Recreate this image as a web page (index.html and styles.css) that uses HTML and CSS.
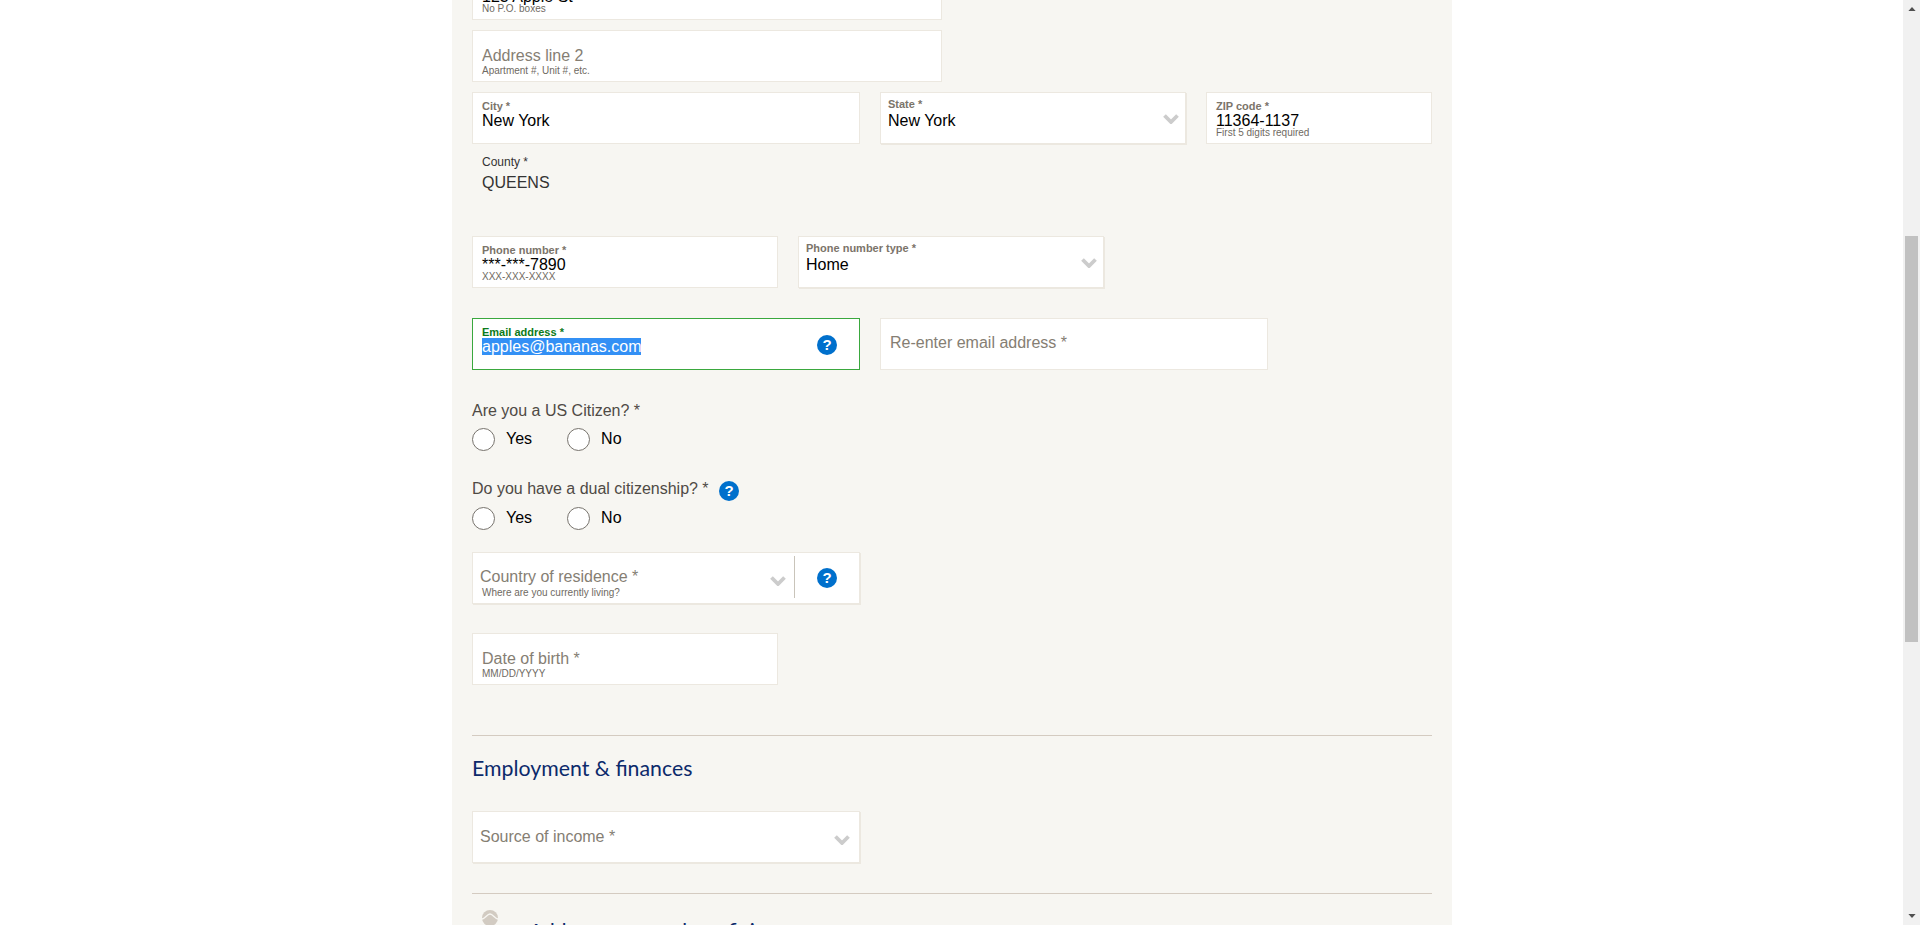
FILE: index.html
```html
<!DOCTYPE html>
<html lang="en">
<head>
    <meta charset="UTF-8">
    <meta name="viewport" content="width=device-width, initial-scale=1.0">
    <title>Application - personal details</title>
    <link rel="stylesheet" href="styles.css">
</head>
<body>

    <div class="window">
        <main class="panel">

            <div class="row row-address">
                <div class="field field-full has-label">
                    <span class="field-label">Address line 1 *</span>
                    <span class="field-value">123 Apple St</span>
                    <span class="field-hint">No P.O. boxes</span>
                </div>
            </div>

            <div class="row row-address">
                <div class="field field-full">
                    <span class="field-placeholder">Address line 2</span>
                    <span class="field-hint">Apartment #, Unit #, etc.</span>
                </div>
            </div>

            <div class="row">
                <div class="field field-wide has-label">
                    <span class="field-label">City *</span>
                    <span class="field-value">New York</span>
                </div>
                <div class="field field-select field-medium has-label">
                    <span class="field-label">State *</span>
                    <span class="field-value">New York</span>
                    <svg class="chevron" viewBox="0 0 16 11"><path d="M1.5 2.5 8 9l6.5-6.5"/></svg>
                </div>
                <div class="field field-zip has-label">
                    <span class="field-label">ZIP code *</span>
                    <span class="field-value">11364-1137</span>
                    <span class="field-hint">First 5 digits required</span>
                </div>
            </div>

            <div class="county">
                <span class="county-label">County *</span>
                <span class="county-value">QUEENS</span>
            </div>

            <div class="row">
                <div class="field field-medium has-label">
                    <span class="field-label">Phone number *</span>
                    <span class="field-value">***-***-7890</span>
                    <span class="field-hint">XXX-XXX-XXXX</span>
                </div>
                <div class="field field-select field-medium has-label">
                    <span class="field-label">Phone number type *</span>
                    <span class="field-value">Home</span>
                    <svg class="chevron" viewBox="0 0 16 11"><path d="M1.5 2.5 8 9l6.5-6.5"/></svg>
                </div>
            </div>

            <div class="row row-email">
                <div class="field field-wide field-focus has-label">
                    <span class="field-label">Email address *</span>
                    <span class="field-value"><span class="selected">apples@bananas.com</span></span>
                    <span class="help help-field">?</span>
                </div>
                <div class="field field-wide field-centered">
                    <span class="field-placeholder">Re-enter email address *</span>
                </div>
            </div>

            <div class="question question-first">
                <p class="question-text">Are you a US Citizen? *</p>
                <div class="radios">
                    <label class="radio"><span class="radio-dot"></span>Yes</label>
                    <label class="radio"><span class="radio-dot"></span>No</label>
                </div>
            </div>

            <div class="question question-second">
                <p class="question-text">Do you have a dual citizenship? * <span class="help help-inline">?</span></p>
                <div class="radios">
                    <label class="radio"><span class="radio-dot"></span>Yes</label>
                    <label class="radio"><span class="radio-dot"></span>No</label>
                </div>
            </div>

            <div class="row">
                <div class="field field-select field-wide field-country">
                    <span class="field-placeholder">Country of residence *</span>
                    <span class="field-hint">Where are you currently living?</span>
                    <svg class="chevron" viewBox="0 0 16 11"><path d="M1.5 2.5 8 9l6.5-6.5"/></svg>
                    <span class="divider"></span>
                    <span class="help help-field">?</span>
                </div>
            </div>

            <div class="row row-birth">
                <div class="field field-medium">
                    <span class="field-placeholder">Date of birth *</span>
                    <span class="field-hint">MM/DD/YYYY</span>
                </div>
            </div>

            <section class="section">
                <h2 class="section-title">Employment &amp; finances</h2>
                <div class="row">
                    <div class="field field-select field-wide field-income">
                        <span class="field-placeholder">Source of income *</span>
                        <svg class="chevron" viewBox="0 0 16 11"><path d="M1.5 2.5 8 9l6.5-6.5"/></svg>
                    </div>
                </div>
            </section>

            <section class="section section-next">
                <div class="next-head">
                    <svg class="next-icon" viewBox="0 0 16 16"><circle class="next-icon-disc" cx="8" cy="8" r="8"/><path class="next-icon-wave" d="M0 9c3 0 5-5 8-5s5 5 8 5"/></svg>
                    <span class="next-title">Add a spouse or beneficiary</span>
                </div>
            </section>

        </main>

        <div class="scrollbar">
            <svg class="scroll-arrow scroll-up" viewBox="0 0 9 5"><path d="M4.5 0 9 5H0z"/></svg>
            <div class="scroll-track"><div class="scroll-thumb"></div></div>
            <svg class="scroll-arrow scroll-down" viewBox="0 0 9 5"><path d="M0 0h9L4.5 5z"/></svg>
        </div>
    </div>

</body>
</html>
```

FILE: styles.css
```css
html, body {
    margin: 0;
    padding: 0;
    height: 100%;
}
body {
    font-family: "Liberation Sans", Arial, sans-serif;
    background-color: #ffffff;
    overflow: hidden;
}
.window {
    display: flex;
    height: 925px;
    overflow: hidden;
}

/* the page is scrolled, so the panel starts above the window */
.panel {
    width: 960px;
    height: 1000px;
    margin: -42px 0 0 452px;
    padding: 10px 20px 0;
    background-color: #f7f6f2;
    flex: none;
}

.row {
    display: flex;
    gap: 20px;
}
.row-address {
    margin-bottom: 10px;
}
.row-email {
    margin-top: 30px;
}
.row-birth {
    margin-top: 29px;
}

.field {
    position: relative;
    display: flex;
    flex-direction: column;
    box-sizing: border-box;
    height: 52px;
    padding: 16px 9px 0;
    background-color: #ffffff;
    border: 1px solid #ece8e0;
}
.field-full {
    width: 470px;
}
.field-wide {
    width: 388px;
}
.field-medium {
    width: 306px;
}
.field-zip {
    width: 226px;
}
.has-label {
    padding-top: 7px;
}
.has-label .field-value {
    margin-top: -1px;
}
.has-label .field-hint {
    margin-top: -2px;
}
.field-select {
    box-shadow: 1px 1px 0 #ece8e0;
}
.field-select .field-label,
.field-select .field-value {
    margin-left: -2px;
}
.field-select.has-label {
    padding-top: 5px;
}
.field-select .field-value {
    margin-top: 1px;
}
.field-centered {
    justify-content: center;
    padding-top: 0;
    padding-bottom: 2px;
}
.field-focus {
    border-color: #3aa83e;
}
.field-focus .field-label {
    color: #0b7a1a;
}
.field-country {
    padding-left: 7px;
    padding-top: 15px;
}
.field-country .field-hint {
    margin-top: 2px;
    margin-left: 2px;
}
.field-income {
    padding-left: 7px;
}

.field-label {
    font-size: 11px;
    font-weight: bold;
    line-height: 13px;
    color: #7b746a;
}
.field-value {
    font-size: 16px;
    line-height: 18px;
    color: #000000;
    white-space: nowrap;
}
.field-placeholder {
    font-size: 16px;
    line-height: 18px;
    color: #857e73;
}
.field-hint {
    margin-top: 1px;
    font-size: 10px;
    line-height: 10px;
    color: #6f6a62;
    white-space: nowrap;
}
.selected {
    background-color: #3390f5;
    color: #ffffff;
}

.chevron {
    position: absolute;
    right: 6px;
    top: 20px;
    width: 16px;
    height: 11px;
    fill: none;
    stroke: #cccccc;
    stroke-width: 3.8;
}
.field-country .chevron {
    right: 73px;
    top: 22px;
}
.field-income .chevron {
    top: 22px;
    right: 9px;
}

.divider {
    position: absolute;
    left: 321px;
    top: 3px;
    width: 1px;
    height: 42px;
    background-color: #c9c4ba;
}

.help {
    display: inline-block;
    width: 20px;
    height: 20px;
    border-radius: 50%;
    background-color: #0070cc;
    color: #ffffff;
    font-size: 15px;
    font-weight: bold;
    line-height: 20px;
    text-align: center;
}
.help-field {
    position: absolute;
    left: 344px;
    top: 16px;
}
.field-country .help-field {
    top: 15px;
}
.help-inline {
    margin-left: 6px;
    vertical-align: -2px;
}

.county {
    display: flex;
    flex-direction: column;
    padding: 11px 10px 0;
    height: 92px;
    box-sizing: border-box;
    color: #333333;
}
.county-label {
    font-size: 12px;
    line-height: 14px;
}
.county-value {
    margin-top: 4px;
    font-size: 16px;
    line-height: 20px;
}

.question-text {
    margin: 0;
    height: 20px;
    font-size: 16px;
    line-height: 20px;
    color: #4f4a45;
}
.question-first {
    margin-top: 31px;
    margin-bottom: 28px;
}
.question-second {
    margin-bottom: 22px;
}
.radios {
    display: flex;
    gap: 35px;
    margin-top: 6px;
}
.question-second .radios {
    margin-top: 7px;
}
.radio {
    display: flex;
    align-items: center;
    gap: 11px;
    height: 24px;
    font-size: 16px;
    color: #000000;
}
.radio-dot {
    box-sizing: border-box;
    width: 23px;
    height: 23px;
    background-color: #ffffff;
    border: 1px solid #77736d;
    border-radius: 50%;
}

.section {
    margin-top: 50px;
    border-top: 1px solid #d4cbc1;
}
.section-title {
    margin: 0;
    padding: 19px 0 30px;
    font-family: Lato, sans-serif;
    font-size: 21.3px;
    font-weight: normal;
    line-height: 26px;
    color: #0c2a6b;
}
.section-next {
    margin-top: 30px;
    padding-top: 16px;
}
.next-head {
    display: flex;
    align-items: flex-start;
    gap: 31px;
    padding-left: 10px;
}
.next-icon {
    width: 16px;
    height: 16px;
    flex: none;
}
.next-icon-disc {
    fill: #d2cbc2;
}
.next-icon-wave {
    fill: none;
    stroke: #f7f6f2;
    stroke-width: 1.3;
}
.next-title {
    margin-top: 8px;
    font-family: Lato, sans-serif;
    font-size: 21px;
    line-height: 26px;
    color: #0c2a6b;
}

.scrollbar {
    position: absolute;
    top: 0;
    right: 0;
    display: flex;
    flex-direction: column;
    align-items: center;
    width: 17px;
    height: 925px;
    background-color: #f1f1f1;
}
.scroll-arrow {
    flex: none;
    width: 8px;
    height: 4px;
    fill: #505050;
}
.scroll-up {
    margin: 7px 0 6px;
}
.scroll-down {
    margin: 6px 0 7px;
}
.scroll-track {
    flex: 1;
    width: 100%;
}
.scroll-thumb {
    width: 13px;
    height: 406px;
    margin: 219px auto 0;
    background-color: #c1c1c1;
}
```
